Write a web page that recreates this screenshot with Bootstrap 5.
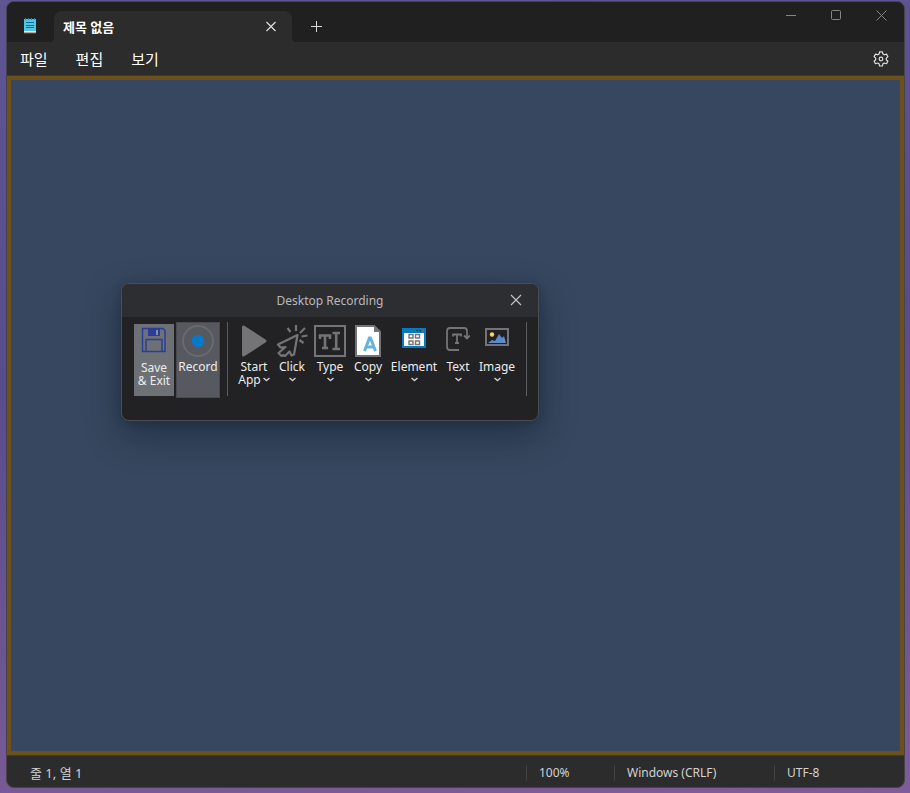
<!DOCTYPE html>
<html lang="ko">
<head>
<meta charset="utf-8">
<meta name="viewport" content="width=device-width, initial-scale=1">
<title>제목 없음</title>
<link href="https://cdn.jsdelivr.net/npm/bootstrap@5.3.0/dist/css/bootstrap.min.css" rel="stylesheet">
<style>
body{font-family:"Noto Sans","Noto Sans CJK KR",sans-serif;font-size:12px;line-height:16px;color:#fff;background:linear-gradient(175deg,#5f5593,#584d8c 45%,#6b5590 75%,#805c98)}
button{border:0;background:none;padding:0;color:inherit}
svg{display:block;fill:none;flex:none}
.desktop{padding:1px 6px 6px}
.win{background:#2c2c2c;border:1px solid #46434f;border-radius:8px;overflow:hidden}
.desktop{padding-right:5px;padding-bottom:5px}
.titlebar{background:#202020;height:40px}
.app-icon{margin:15px 17px 0 16px}
.doc-tab{width:238px;height:31px;background:#2c2c2c;border-radius:8px 8px 0 0;padding:0 15px 0 9px;position:relative;font-size:13px}
.doc-tab::before,.doc-tab::after{content:"";position:absolute;bottom:0;width:4px;height:4px}
.doc-tab::before{left:-4px;background:radial-gradient(circle at 0 0,#202020 4px,#2c2c2c 4px)}
.doc-tab::after{right:-4px;background:radial-gradient(circle at 100% 0,#202020 4px,#2c2c2c 4px)}
.new-tab{margin:9px 0 0 18px;height:31px}
.caption-btn{width:45px;height:27px;color:#858585}
.menubar{height:33px;font-size:15px;padding:0 15px 0 13px;gap:28px}
.editor{border:4px solid #6e501b;outline:1px solid #3b3a3a;background:#36475f;color:#fff;resize:none;margin-top:1px}
.editor:focus{outline:1px solid #3b3a3a}
.statusbar{height:32px;padding:4px 0 0 23px;color:#d2d2d2}
.caret-pos{font-size:13px}
.stat{border-left:1px solid #414141;padding-left:12px}
.stat-zoom{width:88px}.stat-eol{width:160px}.stat-enc{width:130px}
.recorder{left:121px;top:283px;width:418px;background:#222224;border:1px solid #4a4e54;border-radius:8px;box-shadow:0 14px 36px rgba(8,18,30,.42),0 2px 10px rgba(8,18,30,.22);overflow:hidden}
.rec-head{height:33px;background:#2d2e32;color:#b9b9ba}
.rec-close{right:16px;top:10px}
.tools{height:103px;padding:5px 0 0 12px;line-height:13px;color:#ececec}
.tools>*{flex:none}
.tool{width:38px;height:73px;padding-top:3px;white-space:nowrap}
.tool-element{width:54px}.tool-text{width:34px}.tool-image{width:44px}
.tool-label{margin-top:3px}
.chev{margin-top:4px}
.app-chev{margin-left:2px}
.save-btn{width:40px;height:72px;background:#6d7176;margin:2px 2px 0 0;padding-top:2px}
.rec-btn{width:44px;height:76px;background:#575960;border:1px solid #4a4b50;padding-top:2px}
.rule{width:1px;height:74px;background:#5c5c5f;margin:0 7px}
</style>
<script src="https://cdn.jsdelivr.net/npm/bootstrap@5.3.0/dist/js/bootstrap.bundle.min.js"></script>
</head>
<body>
<div class="desktop vh-100 d-flex flex-column">
<main class="win flex-grow-1 d-flex flex-column">
  <header class="titlebar d-flex">
    <svg class="app-icon" width="14" height="18" viewBox="0 0 14 18"><path d="M1 2h12v13H1z" fill="#50c5e6"/><path d="M1 14h12v2H1z" fill="#e9eef0"/><path d="M1 16h12" stroke="#a75523"/><path d="M2.5 1v2M5.5 1v2M8.500 1v2M11.500 1v2" stroke="#168db5"/><path d="M3 5.500h8M3 8.500h8M3 10.500h8" stroke="#08718e"/></svg>
    <div class="doc-tab d-flex align-items-center justify-content-between align-self-end">
      <span class="fw-bold">제목 없음</span>
      <button aria-label="탭 닫기"><svg width="12" height="12" viewBox="0 0 12 12"><path d="M1.500 1l9 9m0-9l-9 9" stroke="#e4e4e4" stroke-width="1.1"/></svg></button>
    </div>
    <button class="new-tab" aria-label="새 탭"><svg width="13" height="13" viewBox="0 0 13 13"><path d="M1 6.500h11M6.500 1v11" stroke="#d8d8d8"/></svg></button>
    <div class="ms-auto d-flex">
      <button class="caption-btn d-flex align-items-center justify-content-center" aria-label="최소화"><svg width="11" height="11"><path d="M0 5.500h10" stroke="currentColor"/></svg></button>
      <button class="caption-btn d-flex align-items-center justify-content-center" aria-label="최대화"><svg width="11" height="11"><rect x=".5" y=".5" width="9" height="9" rx="1" stroke="currentColor"/></svg></button>
      <button class="caption-btn d-flex align-items-center justify-content-center" aria-label="닫기"><svg width="11" height="11"><path d="M.5.5l10 10m0-10l-10 10" stroke="currentColor"/></svg></button>
    </div>
  </header>
  <nav class="menubar d-flex align-items-center">
    <button>파일</button><button>편집</button><button>보기</button>
    <button class="ms-auto" aria-label="설정"><svg width="16" height="16" viewBox="0 0 16 16"><path d="M6.600.8h2.800l.5 2.200 1.400.8 2.200-.7 1.400 2.500-1.600 1.500v1.600l1.600 1.500-1.400 2.500-2.200-.7-1.400.8-.5 2.200H6.600l-.5-2.200-1.400-.8-2.200.7-1.400-2.500 1.600-1.500V7.100L1.100 5.600l1.400-2.500 2.200.7L6.100 3z" stroke="#dedede" stroke-width="1.200" stroke-linejoin="round"/><circle cx="8" cy="8" r="1.800" stroke="#dedede" stroke-width="1.200"/></svg></button>
  </nav>
  <textarea class="editor flex-grow-1 rounded-0" aria-label="텍스트 편집기"></textarea>
  <footer class="statusbar d-flex align-items-center">
    <span class="caret-pos me-auto">줄 1, 열 1</span>
    <span class="stat stat-zoom">100%</span><span class="stat stat-eol">Windows (CRLF)</span><span class="stat stat-enc">UTF-8</span>
  </footer>
</main>
</div>

<section class="recorder position-absolute" role="dialog" aria-labelledby="rec-title">
  <div class="rec-head d-flex align-items-center justify-content-center">
    <span id="rec-title">Desktop Recording</span>
    <button class="rec-close position-absolute" aria-label="Close"><svg width="12" height="12"><path d="M1 1l10 10m0-10L1 11" stroke="#c2c2c4" stroke-width="1.200"/></svg></button>
  </div>
  <div class="tools d-flex">
    <button class="save-btn d-flex flex-column align-items-center">
      <svg width="26" height="32" viewBox="0 0 26 32"><g stroke="#2b3d9b" stroke-width="1.500"><path d="M2 2.500h20l2 2v21H1.500v-23z"/><path d="M5 25V13.500h16V25"/></g><path d="M7 2h12v8H7z" fill="#2b3d9b"/><path d="M15 4h2v5h-2z" fill="#8990a2"/></svg>
      <span class="tool-label">Save<br>&amp; Exit</span>
    </button>
    <button class="rec-btn d-flex flex-column align-items-center">
      <svg width="32" height="32"><circle cx="16" cy="16" r="15" stroke="#696a6c" stroke-width="2"/><circle cx="16" cy="16" r="6.200" fill="#0878c9"/></svg>
      <span class="tool-label">Record</span>
    </button>
    <div class="rule"></div>
    <button class="tool d-flex flex-column align-items-center">
      <svg width="26" height="32"><path d="M2.500 2v28L24 16z" fill="#747476" stroke="#747476" stroke-width="3" stroke-linejoin="round"/></svg>
      <span class="tool-label">Start<span class="d-flex align-items-center">App<svg width="7" height="5" class="app-chev"><path d="M.5 1l3 2.500 3-2.500" stroke="#ccc" stroke-width="1.500"/></svg></span></span>
    </button>
    <button class="tool d-flex flex-column align-items-center">
      <svg width="32" height="32" viewBox="0 0 32 32"><g stroke="#747476" stroke-width="2.200" stroke-linejoin="round"><path d="M21.500 10L2 19.500l2.500 3 5-.5L2.500 28l3 3 2-1 1 1.500 5-5 2 4 2.500-1z"/><path d="M20 6V0M14.500 7l-3-4M24 8l5-5M25.500 11.500l6-1M23.500 15l4 3"/></g></svg>
      <span class="tool-label">Click</span><svg class="chev" width="7" height="5"><path d="M.5 1l3 2.500 3-2.500" stroke="#ccc" stroke-width="1.500"/></svg>
    </button>
    <button class="tool d-flex flex-column align-items-center">
      <svg width="32" height="32"><rect x="1" y="1" width="30" height="30" stroke="#747476" stroke-width="2"/><path d="M6 14v-3.500h10V14M11 10v13M8 23h6M18.500 8h7.500M22.200 8v16M18.500 24h7.500" stroke="#747476" stroke-width="2.600"/></svg>
      <span class="tool-label">Type</span><svg class="chev" width="7" height="5"><path d="M.5 1l3 2.500 3-2.500" stroke="#ccc" stroke-width="1.500"/></svg>
    </button>
    <button class="tool d-flex flex-column align-items-center">
      <svg width="26" height="32"><path d="M1 1h18l6 6v24H1z" fill="#fff" stroke="#747476" stroke-width="2"/><path d="M19 0v7h7z" fill="#747476"/><path d="M9.500 26l5-13h1l5 13M11.500 22h7.500" stroke="#66b4dc" stroke-width="3"/></svg>
      <span class="tool-label">Copy</span><svg class="chev" width="7" height="5"><path d="M.5 1l3 2.500 3-2.500" stroke="#ccc" stroke-width="1.500"/></svg>
    </button>
    <button class="tool tool-element d-flex flex-column align-items-center">
      <svg width="24" height="32"><path d="M0 3h24v20H0z" fill="#087bbd"/><path d="M2 8h20v13H2z" fill="#fff"/><path d="M14.500 5.500h1.500M17.500 5.500h1.500" stroke="#173657" stroke-width="1.500"/><path d="M20.500 5.500H22" stroke="#c4464c" stroke-width="1.500"/><path d="M7 9.500h4v3.500H7zM13.500 9.500h4v3.500h-4zM7 16h4v3.500H7zM13.500 16h4v3.500h-4z" stroke="#747476" stroke-width="1.400"/></svg>
      <span class="tool-label">Element</span><svg class="chev" width="7" height="5"><path d="M.5 1l3 2.500 3-2.500" stroke="#ccc" stroke-width="1.500"/></svg>
    </button>
    <button class="tool tool-text d-flex flex-column align-items-center">
      <svg width="24" height="32"><path d="M13 25H4q-3 0-3-3V6q0-3 3-3h14q3 0 3 3v8M18 10.500l3 3 3-3M7 11.500V9.500h8v2M11 9.500V18M9 18h4" stroke="#747476" stroke-width="1.800"/></svg>
      <span class="tool-label">Text</span><svg class="chev" width="7" height="5"><path d="M.5 1l3 2.500 3-2.500" stroke="#ccc" stroke-width="1.500"/></svg>
    </button>
    <button class="tool tool-image d-flex flex-column align-items-center">
      <svg width="24" height="32"><rect x="1" y="4" width="22" height="16" stroke="#747476" stroke-width="2"/><circle cx="7" cy="9.500" r="2.200" fill="#f1d373"/><path d="M3 18l4-3 3 1 4-7 3 4 2-2 2 7z" fill="#5b8acb"/></svg>
      <span class="tool-label">Image</span><svg class="chev" width="7" height="5"><path d="M.5 1l3 2.500 3-2.500" stroke="#ccc" stroke-width="1.500"/></svg>
    </button>
    <div class="rule"></div>
  </div>
</section>
</body>
</html>
